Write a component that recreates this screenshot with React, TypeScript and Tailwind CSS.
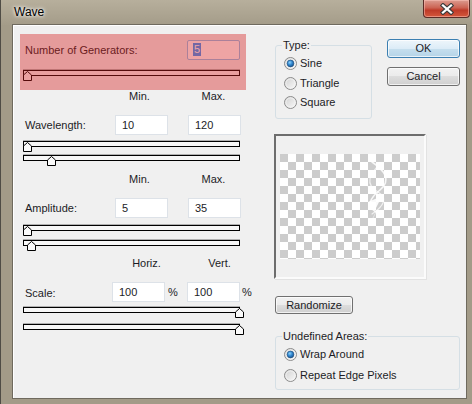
import type { ReactNode } from 'react';

const cx = (...c: string[]) => c.join(' ');

// slider thumb, drawn as the little "house" shape
function Thumb({ left }: { left: number }) {
  return (
    <svg className="absolute top-0" style={{ left }} width="10" height="10" viewBox="0 0 10 10">
      <path d="M4.5 0.5 L8.5 4 V9.5 H0.5 V4 Z" fill="#fafafa" stroke="#000" />
    </svg>
  );
}

// thumb = page x of thumb's left edge
function Slider({ thumb, className }: { thumb: number; className: string }) {
  return (
    <div
      className={cx(
        'relative h-[6px] w-[217px] border border-black bg-[#f7f7f7] shadow-[0_-1px_0_#b0b0b0]',
        className,
      )}
    >
      <Thumb left={thumb - 24} />
    </div>
  );
}

function Field({ value, className = '' }: { value: ReactNode; className?: string }) {
  return (
    <div
      className={cx(
        'h-[20px] w-[53px] shrink-0 border border-[#dde2e8] bg-white pl-[6px] leading-[18px]',
        className,
      )}
    >
      {value}
    </div>
  );
}

function Radio({ checked = false }: { checked?: boolean }) {
  return (
    <svg width="13" height="13" viewBox="0 0 13 13" className="shrink-0">
      <defs>
        <linearGradient id="rbg" x1="0" y1="0" x2="1" y2="1">
          <stop offset="0" stopColor="#cfcfcf" />
          <stop offset="1" stopColor="#fbfbfb" />
        </linearGradient>
        <radialGradient id="rdot" cx="0.4" cy="0.35" r="0.7">
          <stop offset="0" stopColor="#8fd3fb" />
          <stop offset="0.5" stopColor="#2f86d0" />
          <stop offset="1" stopColor="#1b4f86" />
        </radialGradient>
      </defs>
      <circle cx="6.5" cy="6.5" r="6" fill="url(#rbg)" stroke="#8c8c8c" />
      <circle cx="6.5" cy="6.5" r="4.6" fill="none" stroke="#f4f4f4" strokeWidth="0.8" />
      {checked && <circle cx="6.5" cy="6.5" r="3.4" fill="url(#rdot)" stroke="#1d4d7c" strokeWidth="0.6" />}
    </svg>
  );
}

function RadioRow({ label, checked, className }: { label: string; checked?: boolean; className: string }) {
  return (
    <div className={cx('flex h-[13px] items-center gap-[3px] leading-[13px]', className)}>
      <Radio checked={checked} />
      <span>{label}</span>
    </div>
  );
}

function Button({ children, className, primary = false }: { children: ReactNode; className: string; primary?: boolean }) {
  return (
    <div
      className={cx(
        'flex items-center justify-center rounded-[3px] border shadow-[inset_0_0_0_1px_rgba(255,255,255,0.7)]',
        primary
          ? 'border-[#3c7fb1] bg-[linear-gradient(#eef6fb,#dcecf7_50%,#c6dfee_50%,#b5d4e8)]'
          : 'border-[#707070] bg-[linear-gradient(#f2f2f2,#ebebeb_50%,#dddddd_50%,#cfcfcf)]',
        className,
      )}
    >
      {children}
    </div>
  );
}

export default function App() {
  return (
    <div className="flex h-[404px] w-[472px] flex-col overflow-hidden border-l border-[#4f4c45] bg-[#a39b88] font-['Liberation_Sans',Arial,sans-serif] text-[11px] text-[#1c1c26]">
      {/* Title bar */}
      <div className="flex h-[25px] shrink-0 items-start bg-[linear-gradient(#b7af9c,#a49c89)]">
        <span className="ml-[13px] mt-[5px] text-[12px] leading-[14px] text-black [text-shadow:0_0_5px_#fff,0_0_3px_#fff]">
          Wave
        </span>
        <div className="ml-auto mr-[2px] flex h-[18px] w-[47px] items-center justify-center rounded-b-[4px] border border-t-0 border-[#5a2c26] bg-[linear-gradient(#dc9c90,#cc6454_45%,#be3a28_60%,#d4583c)] shadow-[inset_0_0_0_1px_rgba(255,200,190,0.5)]">
          <svg width="14" height="12" viewBox="0 0 14 12">
            <path d="M3 2.5 L11 9.5 M11 2.5 L3 9.5" stroke="#3b3b3b" strokeWidth="4.4" strokeLinecap="square" />
            <path d="M3 2.5 L11 9.5 M11 2.5 L3 9.5" stroke="#fff" strokeWidth="2.3" strokeLinecap="square" />
          </svg>
        </div>
      </div>

      <div className="flex pl-[12px]">
        {/* Client area */}
        <div className="flex h-[373px] w-[453px] bg-[#f0f0f0] shadow-[inset_1px_1px_0_#ffffff,0_0_0_1px_#6f6a5e]">
          {/* Left column */}
          <div className="flex w-[261px] shrink-0 flex-col pt-[9px]">
            <div className="relative ml-[7px] flex h-[56px] w-[226px] flex-col">
              <div className="mt-[6px] flex h-[20px] items-center">
                <span className="ml-[5px]">Number of Generators:</span>
                <div className="ml-auto mr-[6px] h-[20px] w-[53px] rounded-[2px] border border-[#8fc3ef] bg-white pl-[5px] pt-[2px] leading-[13px]">
                  <span className="inline-block bg-[#3399ff] px-[1px] text-white">5</span>
                </div>
              </div>
              <Slider thumb={23} className="ml-[3px] mt-[10px]" />
              <div className="pointer-events-none absolute inset-0 bg-[rgba(212,27,27,0.4)]" />
            </div>

            <div className="flex h-[13px] leading-[13px]">
              <span className="ml-[100px] w-[53px] text-center">Min.</span>
              <span className="ml-[21px] w-[53px] text-center">Max.</span>
            </div>
            <div className="mt-[12px] flex h-[20px] items-center">
              <span className="ml-[12px] w-[90px]">Wavelength:</span>
              <Field value="10" />
              <Field value="120" className="ml-[20px]" />
            </div>
            <Slider thumb={23} className="ml-[10px] mt-[6px]" />
            <Slider thumb={47} className="ml-[10px] mt-[8px]" />

            <div className="mt-[12px] flex h-[13px] leading-[13px]">
              <span className="ml-[100px] w-[53px] text-center">Min.</span>
              <span className="ml-[21px] w-[53px] text-center">Max.</span>
            </div>
            <div className="mt-[12px] flex h-[20px] items-center">
              <span className="ml-[12px] w-[90px]">Amplitude:</span>
              <Field value="5" />
              <Field value="35" className="ml-[20px]" />
            </div>
            <Slider thumb={23} className="ml-[10px] mt-[7px]" />
            <Slider thumb={27} className="ml-[10px] mt-[9px]" />

            <div className="mt-[11px] flex h-[13px] leading-[13px]">
              <span className="ml-[107px] w-[53px] text-center">Horiz.</span>
              <span className="ml-[20px] w-[53px] text-center">Vert.</span>
            </div>
            <div className="mt-[12px] flex h-[20px] items-center">
              <span className="ml-[12px] mt-[3px] w-[87px]">Scale:</span>
              <Field value="100" />
              <span className="ml-[3px] w-[19px]">%</span>
              <Field value="100" />
              <span className="ml-[2px]">%</span>
            </div>
            <Slider thumb={235} className="ml-[10px] mt-[5px]" />
            <Slider thumb={235} className="ml-[10px] mt-[11px]" />
          </div>

          {/* Right column */}
          <div className="flex flex-col">
            <div className="mt-[14px] flex items-start">
              <fieldset className="ml-[1px] h-[80px] w-[97px] rounded-[3px] border border-[#d5dfe5]">
                <legend className="ml-[6px] px-[1px] leading-[13px]">Type:</legend>
                <div className="ml-[8px] flex flex-col">
                  <RadioRow label="Sine" checked className="mt-[5px]" />
                  <RadioRow label="Triangle" className="mt-[7px]" />
                  <RadioRow label="Square" className="mt-[6px]" />
                </div>
              </fieldset>
              <div className="ml-[15px] flex flex-col">
                <Button primary className="h-[19px] w-[73px]">OK</Button>
                <Button className="mt-[9px] h-[19px] w-[73px]">Cancel</Button>
              </div>
            </div>

            {/* Preview */}
            <div className="mt-[15px] h-[145px] w-[152px] border-2 border-b-[#fbfbfb] border-l-[#6d6d6d] border-r-[#fbfbfb] border-t-[#6d6d6d] bg-[#f0f0f0] shadow-[1px_1px_0_#e2e2e2]">
              <div className="relative ml-[4px] mt-[18px] h-[105px] w-[140px] bg-[conic-gradient(#fff_25%,#cccccc_0_50%,#fff_0_75%,#cccccc_0)] bg-[length:16px_16px]">
                <svg className="absolute left-0 top-0" width="140" height="105" viewBox="0 0 140 105">
                  <g fill="none" stroke="#fff" strokeLinecap="round">
                    <path d="M92 8 C104 16 112 26 100 36 C90 44 86 52 96 58" strokeWidth="1.6" opacity="0.85" />
                    <path d="M100 10 C90 20 84 30 98 38 C108 44 104 52 92 60" strokeWidth="1.2" opacity="0.7" />
                    <path d="M84 30 C92 34 100 40 104 48" strokeWidth="1" opacity="0.5" />
                    <path d="M88 48 L102 42 L96 54 Z" fill="#fff" stroke="none" opacity="0.9" />
                    <path d="M96 58 C94 62 92 66 90 70" strokeWidth="1" opacity="0.45" />
                  </g>
                </svg>
              </div>
            </div>

            <Button className="ml-[1px] mt-[17px] h-[18px] w-[78px]">Randomize</Button>

            <fieldset className="ml-[1px] mt-[16px] h-[60px] w-[185px] rounded-[3px] border border-[#d5dfe5]">
              <legend className="ml-[6px] px-[1px] leading-[13px]">Undefined Areas:</legend>
              <div className="ml-[8px] flex flex-col">
                <RadioRow label="Wrap Around" checked className="mt-[5px]" />
                <RadioRow label="Repeat Edge Pixels" className="mt-[8px]" />
              </div>
            </fieldset>
          </div>
        </div>
      </div>
    </div>
  );
}
